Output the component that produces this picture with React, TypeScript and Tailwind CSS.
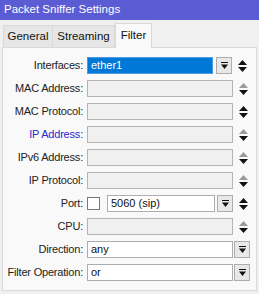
import React from "react";

const font = { fontFamily: '"Liberation Sans", Arial, sans-serif' };

function UpDown({ dim }: { dim?: boolean }) {
  return (
    <svg width="9" height="12" viewBox="0 0 9 12" className="block">
      <polygon points="4.5,0 9,5 0,5" fill={dim ? "#9a9a9a" : "#111"} />
      <polygon points="0,7 9,7 4.5,12" fill="#111" />
    </svg>
  );
}

function DropBtn() {
  return (
    <div className="w-[16px] h-[17px] border border-[#adadad] bg-[#e8e8e8] flex items-center justify-center shrink-0">
      <svg width="7" height="7" viewBox="0 0 7 7" className="block">
        <rect x="0" y="0" width="7" height="1" fill="#111" />
        <polygon points="0,2.5 7,2.5 3.5,7" fill="#111" />
      </svg>
    </div>
  );
}

function Label({ text, blue }: { text: string; blue?: boolean }) {
  return (
    <div
      className={`w-[81px] shrink-0 text-right pr-[1px] text-[11px] tracking-[-0.2px] leading-none ${
        blue ? "text-[#2a2ad0]" : "text-[#222]"
      }`}
    >
      {text}
    </div>
  );
}

function Empty({ w }: { w: string }) {
  return <div className={`${w} h-[17px] border border-[#b4b4b4] bg-[#f0f0f0] shrink-0`} />;
}

function Field({ w, value }: { w: string; value: string }) {
  return (
    <div className={`${w} h-[17px] border border-[#adadad] bg-white shrink-0 flex items-center pl-[3px] text-[11px] text-[#111] leading-none`}>
      {value}
    </div>
  );
}

export default function App() {
  return (
    <div style={font} className="w-[259px] h-[294px] bg-[#f0f0f0] overflow-hidden flex flex-col">
      <div className="h-[20px] bg-[#5b5bd4] flex items-center pl-[4px] text-white text-[11.5px] leading-none shrink-0">
        Packet Sniffer Settings
      </div>
      <div className="h-[27px] flex items-end pl-[3px] shrink-0">
        <div className="h-[22px] w-[50px] border border-b-0 border-[#d9d9d9] bg-[#e6e6e6] flex items-center justify-center text-[11.5px] text-[#111]">
          General
        </div>
        <div className="h-[22px] w-[62px] border border-b-0 border-l-0 border-[#d9d9d9] bg-[#e6e6e6] flex items-center justify-center text-[11.5px] text-[#111]">
          Streaming
        </div>
        <div className="h-[25px] w-[37px] border border-b-0 border-[#d9d9d9] bg-[#f9f9f9] flex items-center justify-center text-[11.5px] text-[#111] -mb-px relative z-10">
          Filter
        </div>
      </div>
      <div className="mx-[2px] h-[244px] border border-[#d9d9d9] bg-[#f9f9f9] flex flex-col gap-[6px] pt-[9px]">
        <div className="flex items-center">
          <Label text="Interfaces:" />
          <div className="ml-[3px] w-[126px] h-[17px] border border-[#4a9ae6] bg-[#0078d7] flex items-center pl-[3px] text-[11px] text-white leading-none shrink-0">
            ether1
          </div>
          <div className="ml-[3px]"><DropBtn /></div>
          <div className="ml-[6px]"><UpDown /></div>
        </div>
        <div className="flex items-center">
          <Label text="MAC Address:" />
          <div className="ml-[3px]"><Empty w="w-[146px]" /></div>
          <div className="ml-[6px]"><UpDown dim /></div>
        </div>
        <div className="flex items-center">
          <Label text="MAC Protocol:" />
          <div className="ml-[3px]"><Empty w="w-[146px]" /></div>
          <div className="ml-[6px]"><UpDown /></div>
        </div>
        <div className="flex items-center">
          <Label text="IP Address:" blue />
          <div className="ml-[3px]"><Empty w="w-[146px]" /></div>
          <div className="ml-[6px]"><UpDown dim /></div>
        </div>
        <div className="flex items-center">
          <Label text="IPv6 Address:" />
          <div className="ml-[3px]"><Empty w="w-[146px]" /></div>
          <div className="ml-[6px]"><UpDown dim /></div>
        </div>
        <div className="flex items-center">
          <Label text="IP Protocol:" />
          <div className="ml-[3px]"><Empty w="w-[146px]" /></div>
          <div className="ml-[6px]"><UpDown dim /></div>
        </div>
        <div className="flex items-center">
          <Label text="Port:" />
          <div className="ml-[3px] w-[13px] h-[13px] border border-[#777] bg-white shrink-0" />
          <div className="ml-[7px]"><Field w="w-[108px]" value="5060 (sip)" /></div>
          <div className="ml-[2px]"><DropBtn /></div>
          <div className="ml-[6px]"><UpDown /></div>
        </div>
        <div className="flex items-center">
          <Label text="CPU:" />
          <div className="ml-[3px]"><Empty w="w-[146px]" /></div>
          <div className="ml-[6px]"><UpDown dim /></div>
        </div>
        <div className="flex items-center">
          <Label text="Direction:" />
          <div className="ml-[3px]"><Field w="w-[146px]" value="any" /></div>
          <div className="ml-[1px]"><DropBtn /></div>
        </div>
        <div className="flex items-center">
          <Label text="Filter Operation:" />
          <div className="ml-[3px]"><Field w="w-[146px]" value="or" /></div>
          <div className="ml-[1px]"><DropBtn /></div>
        </div>
      </div>
    </div>
  );
}
